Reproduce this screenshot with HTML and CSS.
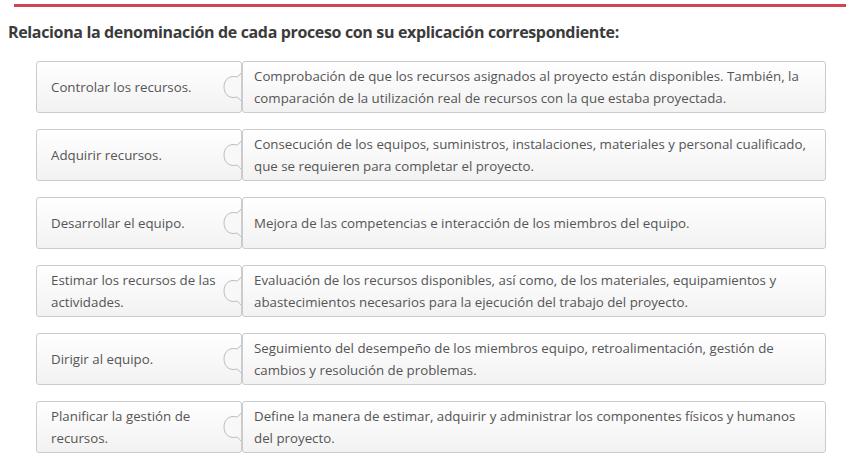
FILE: index.html
```html
<!DOCTYPE html>
<html lang="es">
<head>
<meta charset="utf-8">
<link rel="stylesheet" href="styles.css">
</head>
<body>
<div class="topbar"></div>
<h1 class="title">Relaciona la denominación de cada proceso con su explicación correspondiente:</h1>
<div class="rows">
  <div class="row">
    <div class="term">Controlar los recursos.</div>
    <div class="def">Comprobación de que los recursos asignados al proyecto están disponibles. También, la comparación de la utilización real de recursos con la que estaba proyectada.</div>
    <svg class="knob" viewBox="0 0 22 52" width="22" height="52"><path d="M19,12 C18,14 16,15 15,16 C8,14 2,18 2,26 C2,34 8,38 15,36 C16,37 18,38 19,40"/></svg>
  </div>
  <div class="row">
    <div class="term">Adquirir recursos.</div>
    <div class="def">Consecución de los equipos, suministros, instalaciones, materiales y personal cualificado, que se requieren para completar el proyecto.</div>
    <svg class="knob" viewBox="0 0 22 52" width="22" height="52"><path d="M19,12 C18,14 16,15 15,16 C8,14 2,18 2,26 C2,34 8,38 15,36 C16,37 18,38 19,40"/></svg>
  </div>
  <div class="row">
    <div class="term">Desarrollar el equipo.</div>
    <div class="def">Mejora de las competencias e interacción de los miembros del equipo.</div>
    <svg class="knob" viewBox="0 0 22 52" width="22" height="52"><path d="M19,12 C18,14 16,15 15,16 C8,14 2,18 2,26 C2,34 8,38 15,36 C16,37 18,38 19,40"/></svg>
  </div>
  <div class="row">
    <div class="term">Estimar los recursos de las actividades.</div>
    <div class="def">Evaluación de los recursos disponibles, así como, de los materiales, equipamientos y abastecimientos necesarios para la ejecución del trabajo del proyecto.</div>
    <svg class="knob" viewBox="0 0 22 52" width="22" height="52"><path d="M19,12 C18,14 16,15 15,16 C8,14 2,18 2,26 C2,34 8,38 15,36 C16,37 18,38 19,40"/></svg>
  </div>
  <div class="row">
    <div class="term">Dirigir al equipo.</div>
    <div class="def">Seguimiento del desempeño de los miembros equipo, retroalimentación, gestión de cambios y resolución de problemas.</div>
    <svg class="knob" viewBox="0 0 22 52" width="22" height="52"><path d="M19,12 C18,14 16,15 15,16 C8,14 2,18 2,26 C2,34 8,38 15,36 C16,37 18,38 19,40"/></svg>
  </div>
  <div class="row">
    <div class="term">Planificar la gestión de recursos.</div>
    <div class="def">Define la manera de estimar, adquirir y administrar los componentes físicos y humanos del proyecto.</div>
    <svg class="knob" viewBox="0 0 22 52" width="22" height="52"><path d="M19,12 C18,14 16,15 15,16 C8,14 2,18 2,26 C2,34 8,38 15,36 C16,37 18,38 19,40"/></svg>
  </div>
</div>
</body>
</html>
```
FILE: styles.css
```css
html, body {
  margin: 0;
  padding: 0;
  background: #fff;
}
body {
  font-family: "Open Sans", "DejaVu Sans", sans-serif;
  color: #555;
}
.topbar {
  height: 3px;
  margin: 4px 4px 0 14px;
  background: #d5434e;
}
.title {
  margin: 14px 0 0 8px;
  font-size: 16px;
  line-height: 22px;
  font-weight: 700;
  letter-spacing: -0.35px;
  color: #3b3b3b;
}
.rows {
  display: flex;
  flex-direction: column;
  gap: 16px;
  margin: 18px 24px 0 36px;
}
.row {
  position: relative;
  display: flex;
  height: 52px;
}
.term, .def {
  box-sizing: border-box;
  display: flex;
  align-items: center;
  font-size: 13.3px;
  line-height: 22px;
  border: 1px solid #cbcbcb;
  border-radius: 3px;
  background: linear-gradient(#ffffff, #f2f2f2);
}
.term {
  width: 206px;
  padding: 0 18px 0 14px;
}
.def {
  flex: 1;
  padding: 0 12px 0 11px;
}
.knob {
  position: absolute;
  left: 186px;
  top: 0;
}
.knob path {
  fill: #f8f8f8;
  stroke: #bdbdbd;
  stroke-width: 1;
}
```
